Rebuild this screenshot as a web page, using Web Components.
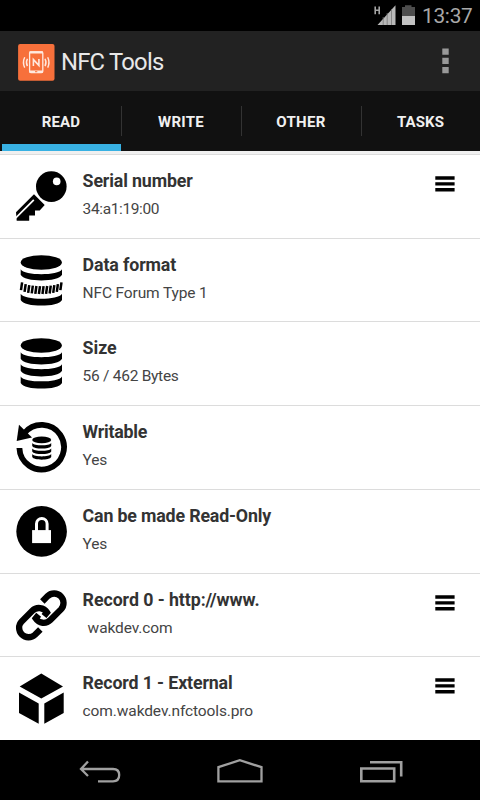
<!DOCTYPE html>
<html lang="en"><head><meta charset="utf-8"><title>NFC Tools</title>
<style>html,body{margin:0;height:100%;background:#000}body{font-family:Roboto,"Liberation Sans",sans-serif;overflow:hidden}</style></head>
<body><nfc-app></nfc-app>
<script>
const define=(name,html,setup)=>customElements.define(name,class extends HTMLElement{
  connectedCallback(){
    if(this.shadowRoot)return;
    this.attachShadow({mode:'open'}).innerHTML=typeof html==='function'?html(this):html;
    if(setup)setup(this);
  }
});

/* One line of text whose tracking is adjusted to fill a given width. */
define('fit-text','<style>:host{display:block;white-space:pre;width:max-content}span{display:inline-block}</style><span><slot></slot></span>',el=>{
  const s=el.shadowRoot.querySelector('span'),w=+el.getAttribute('width');
  const n=el.textContent.length;
  s.style.letterSpacing=(w-s.getBoundingClientRect().width)/n+'px';
});

const band=(a,b)=>`<path d="M5.7 ${a}C9 ${a+6.6} 43.7 ${a+6.6} 47 ${a}V${b}C43.7 ${b+7.6} 9 ${b+7.6} 5.7 ${b}Z"/>`;
const disk='<ellipse cx="26.3" cy="8.5" rx="20.6" ry="7.3"/>';
const stack=disk+band(15.2,21.7)+band(27.2,33.7)+band(39.4,45.9);
let ticks='';
for(let i=0;i<12;i++){
  const x=6.6+i*3.58,u=(x-26.3)/20.7,d=5.6*Math.sqrt(Math.max(0,1-u*u));
  ticks+=`<path d="M${x+.5} ${26.6+d}L${x-.6} ${34.4+d}" stroke="#000" stroke-width="2.5"/>`;
}
const half='<path d="M97 51L113 35A28.3 28.3 0 0 1 153 75L121 107A28.3 28.3 0 0 1 77 102L86 91" fill="none" stroke="#000" stroke-width="19"/>';
const icons={
  key:'<circle cx="36.3" cy="16.6" r="15.3"/><circle cx="41.7" cy="11.4" r="3.8" fill="#fff"/><path d="M19 24.3L29.7 35L24.7 40.4H20V45.6H14.2V50.7H1.7L1 42.3Z"/><path d="M.5 48.2L18.8 29.9" stroke="#fff" stroke-width="1.8"/>',
  format:disk+band(15.2,20.8)+ticks+band(39.8,45.9),
  size:stack,
  writable:`<path d="M4.4 27A22.3 22.3 0 1 0 9.5 12" fill="none" stroke="#000" stroke-width="5.8"/><path d="M4 3.7L1.7 19.9L17 16.6Z"/><g transform="translate(14.6 15) scale(.46)">${stack}</g>`,
  lock:'<circle cx="26.6" cy="26.4" r="25.3"/><path d="M17.1 25.1H36V38.1H17.1Z" fill="#fff"/><path d="M21.5 26V18.8A5.3 5.3 0 0 1 32.1 18.8V26" fill="none" stroke="#fff" stroke-width="3"/>',
  link:`<g transform="translate(-5 -4.6) scale(.3333)">${half}<g transform="rotate(180 94 93)">${half}</g></g>`,
  cube:'<path d="M26.3 1.4L48 14.4L26.3 26.5L4.7 14.4ZM4 20.4L23.7 31.4V51.7L4 41ZM29.3 31.4L48.7 20.4V41L29.3 51.7Z"/>'
};
define('tag-icon',el=>`<style>:host,svg{display:block;width:54px;height:54px}</style><svg viewBox="0 0 54 54">${icons[el.getAttribute('name')]}</svg>`);

define('tag-row',el=>`<style>
:host{display:flex;border-top:1px solid #dcdcdc;box-sizing:border-box;min-height:0;padding:15px 25px 0 15px;background:#fff}
.text{margin-left:13.6px;flex:1;color:#333}
.title{font-size:17.8px;font-weight:700;line-height:22px;color:#333}
.value{font-size:15.5px;line-height:20px;margin-top:7px;color:#444}
.menu{margin-top:6px;width:20px;height:16px;display:block}
</style><tag-icon name="${el.getAttribute('icon')}"></tag-icon><div class="text"><div class="title"><slot name="title"></slot></div><div class="value"><slot></slot></div></div>${el.hasAttribute('menu')?'<svg class="menu" viewBox="0 0 20 16"><path d="M.3 .3H19.6V3.7H.3ZM.3 6.2H19.6V9.6H.3ZM.3 12.1H19.6V15.5H.3Z"/></svg>':''}`);

define('status-bar',`<style>:host{display:flex;height:31px;background:#000;justify-content:flex-end;box-sizing:border-box;padding:0 7.5px 0 0;color:#a9a9a9;font-size:20.8px;line-height:32px}svg{display:block;width:42px;height:31px;margin-right:7px}fit-text{height:31px}</style>
<svg viewBox="373 0 42 31"><path d="M375.2 6.5V14.2M379.2 6.5V14.2M375 10.3H379.4" fill="none" stroke="#a5a5a5" stroke-width="1.6"/><path d="M377.5 25L395.5 5.3V25Z" fill="#b8b8b8"/><path d="M383.2 17V25M387.2 13V25M391.5 9V25" stroke="#777" stroke-width=".8"/><path d="M402 7H405V5.3H411.5V7H415V16H402Z" fill="#4d4d4d"/><path d="M402 16H415V25H402Z" fill="#c2c2c2"/></svg><fit-text width="50.5">13:37</fit-text>`);

define('action-bar',`<style>:host{display:flex;height:60px;background:#222;align-items:center;box-sizing:border-box;padding:2px 31.5px 0 18px;color:#e8e8e8;font-size:23.8px}.logo{width:37px;height:37px;margin-right:6px}.more{width:7px;height:26px;margin-left:auto;margin-top:-2px}svg{display:block}</style>
<svg class="logo" viewBox="0 0 37 37"><rect x=".1" y=".1" width="36.4" height="36.6" rx="2" fill="#f7703b"/><g fill="none" stroke="#ffe9df"><rect x="11.6" y="7.8" width="13.2" height="20.8" rx="1.3" stroke-width="1.3"/><path d="M11.5 8.4H24.9M11.5 27.7H24.9" stroke-width="2.2"/><path d="M15.4 22V15.6L20.9 21.4V15" stroke-width="1.6"/><path d="M9.4 14.7Q7.5 18.4 9.4 22.1M6.7 13.2Q4.2 18.4 6.7 23.6M27 14.7Q28.9 18.4 27 22.1M29.7 13.2Q32.2 18.4 29.7 23.6" stroke-width="1.4"/></g><path d="M17 27.7H19.3" stroke="#f7703b"/></svg>
<fit-text width="102.5">NFC Tools</fit-text>
<svg class="more" viewBox="0 0 7 26"><path d="M.3 .5H6.7V6.7H.3ZM.3 9.8H6.7V16H.3ZM.3 19.1H6.7V25.3H.3Z" fill="#999"/></svg>`);

define('tab-item',el=>`<style>:host{display:flex;justify-content:center;align-items:center;background:${el.hasAttribute('active')?'linear-gradient(#38b1e3,#38b1e3) 2px 100%/100% 7px no-repeat':'none'};color:#f0f0f0;font-weight:700;font-size:15px}</style><slot></slot>`);
define('tab-bar',`<style>:host{display:grid;grid-template-columns:121px 1px 119px 1px 119px 1px 1fr;height:60px;background:#111}i{background:#333;height:30px;margin-top:15px}tab-item{padding:2px 0 0 1px}tab-item+i+tab-item{padding:2px 1px 0 0}</style>
<tab-item active><fit-text width="38.5">READ</fit-text></tab-item><i></i><tab-item><fit-text width="46">WRITE</fit-text></tab-item><i></i><tab-item><fit-text width="49.5">OTHER</fit-text></tab-item><i></i><tab-item><fit-text width="47">TASKS</fit-text></tab-item>`);

define('nav-bar',`<style>:host{display:flex;height:60px;background:#000}svg{display:block;width:480px;height:60px}</style><svg viewBox="0 740 480 60" fill="none" stroke="#a0a0a0" stroke-width="2.3"><path d="M88 761.5L81 769L88 776M81 769H113C117.5 769 119.2 771.7 119.2 775C119.2 778.5 117.2 781.3 113 781.3H98"/><path d="M218.4 781.3V767.2L239.8 760.2L261.5 767.2V781.3Z"/><path d="M361.3 768.5H394.2V781.2H361.3ZM370 762.3H401.2V776.5" stroke-width="2.6"/></svg>`);

define('nfc-app',`<style>:host{display:flex;flex-direction:column;width:480px;height:800px;background:#fff}
.edge{height:3px;background:#f0f0f0}
main{flex:1;min-height:0;display:grid;grid-template-rows:repeat(7,1fr)}
[slot]{display:block}.indent{margin-left:5px}</style>
<status-bar></status-bar><action-bar></action-bar><tab-bar></tab-bar><div class="edge"></div>
<main>
<tag-row icon="key" menu><fit-text slot="title" width="110">Serial number</fit-text><fit-text width="76.5">34:a1:19:00</fit-text></tag-row>
<tag-row icon="format"><fit-text slot="title" width="93.5">Data format</fit-text><fit-text width="125">NFC Forum Type 1</fit-text></tag-row>
<tag-row icon="size"><fit-text slot="title" width="34">Size</fit-text><fit-text width="96">56 / 462 Bytes</fit-text></tag-row>
<tag-row icon="writable"><fit-text slot="title" width="64.5">Writable</fit-text><fit-text width="24.5">Yes</fit-text></tag-row>
<tag-row icon="lock"><fit-text slot="title" width="188.5">Can be made Read-Only</fit-text><fit-text width="24.5">Yes</fit-text></tag-row>
<tag-row icon="link" menu><fit-text slot="title" width="177">Record 0 - http://www.</fit-text><fit-text class="indent" width="85">wakdev.com</fit-text></tag-row>
<tag-row icon="cube" menu><fit-text slot="title" width="150">Record 1 - External</fit-text><fit-text width="170.5">com.wakdev.nfctools.pro</fit-text></tag-row>
</main><nav-bar></nav-bar>`);
</script></body></html>
